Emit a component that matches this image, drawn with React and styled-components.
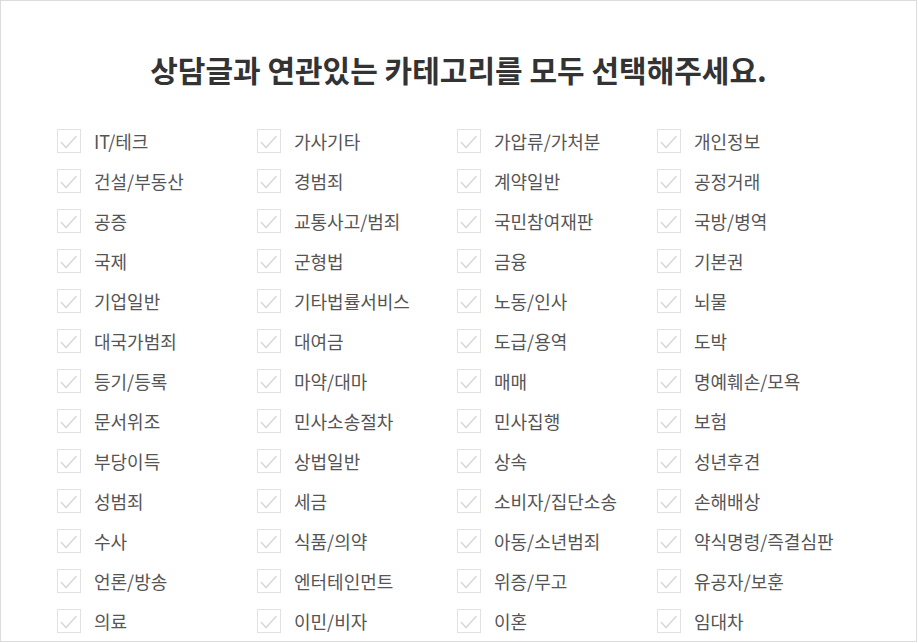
import styled, { createGlobalStyle } from 'styled-components'

const GlobalStyle = createGlobalStyle`
  html, body {
    margin: 0;
    padding: 0;
    background: #fff;
  }
  body {
    font-family: "Noto Sans CJK KR", "Noto Sans", sans-serif;
  }
`

const Card = styled.div`
  box-sizing: border-box;
  width: 917px;
  height: 642px;
  border: 1px solid #dcdcdc;
  background: #fff;
  overflow: hidden;
  padding: 0 0 0 56px;
`

const Title = styled.h2`
  margin: 0 0 0 -56px;
  padding: 48px 0 0;
  height: 72px;
  text-align: center;
  font-size: 30px;
  font-weight: 700;
  line-height: 40px;
  color: #333;
`

const Grid = styled.div`
  display: grid;
  grid-template-columns: repeat(4, 200px);
  grid-auto-rows: 40px;
`

const Item = styled.label`
  display: flex;
  align-items: center;
  gap: 13px;
  font-size: 18px;
  color: #555;
  cursor: pointer;
`

const Box = styled.span`
  box-sizing: border-box;
  width: 24px;
  height: 24px;
  border: 1px solid #e2e2e2;
  display: flex;
  align-items: center;
  justify-content: center;
  flex-shrink: 0;
`

const categories = [
  'IT/테크', '가사기타', '가압류/가처분', '개인정보',
  '건설/부동산', '경범죄', '계약일반', '공정거래',
  '공증', '교통사고/범죄', '국민참여재판', '국방/병역',
  '국제', '군형법', '금융', '기본권',
  '기업일반', '기타법률서비스', '노동/인사', '뇌물',
  '대국가범죄', '대여금', '도급/용역', '도박',
  '등기/등록', '마약/대마', '매매', '명예훼손/모욕',
  '문서위조', '민사소송절차', '민사집행', '보험',
  '부당이득', '상법일반', '상속', '성년후견',
  '성범죄', '세금', '소비자/집단소송', '손해배상',
  '수사', '식품/의약', '아동/소년범죄', '약식명령/즉결심판',
  '언론/방송', '엔터테인먼트', '위증/무고', '유공자/보훈',
  '의료', '이민/비자', '이혼', '임대차',
]

const Check = () => (
  <svg width="24" height="24" viewBox="0 0 24 24" style={{ margin: -1 }}>
    <path d="M4 13 L9 18.5 L19.5 7" fill="none" stroke="#d9d9d9" strokeWidth="1.6" />
  </svg>
)

const App = () => (
  <>
    <GlobalStyle />
    <Card>
      <Title>상담글과 연관있는 카테고리를 모두 선택해주세요.</Title>
      <Grid>
        {categories.map(name => (
          <Item key={name}>
            <Box><Check /></Box>
            <span>{name}</span>
          </Item>
        ))}
      </Grid>
    </Card>
  </>
)

export default App
